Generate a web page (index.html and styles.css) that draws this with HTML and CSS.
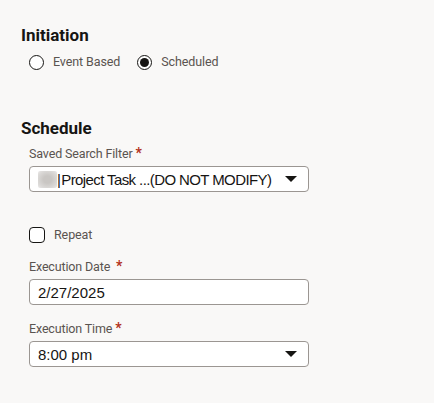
FILE: index.html
```html
<!DOCTYPE html>
<html>
<head>
<meta charset="utf-8">
<link rel="stylesheet" href="styles.css">
</head>
<body>
<div class="page">
  <section class="section">
    <h2 class="heading">Initiation</h2>
    <div class="radios">
      <label class="radio"><span class="radio-dot"></span><span class="opt-text">Event Based</span></label>
      <label class="radio"><span class="radio-dot checked"></span><span class="opt-text">Scheduled</span></label>
    </div>
  </section>

  <section class="section schedule">
    <h2 class="heading">Schedule</h2>
    <div class="field">
      <div class="label">Saved Search Filter <span class="req">*</span></div>
      <div class="box select">
        <span class="value tight"><span class="blur"></span><span class="caret-bar">|</span>Project Task ...(DO NOT MODIFY)</span>
        <span class="arrow"></span>
      </div>
    </div>

    <label class="check"><span class="check-box"></span><span class="opt-text">Repeat</span></label>

    <div class="field">
      <div class="label">Execution Date&nbsp; <span class="req">*</span></div>
      <div class="box"><span class="value">2/27/2025</span></div>
    </div>

    <div class="field">
      <div class="label">Execution Time <span class="req">*</span></div>
      <div class="box select">
        <span class="value">8:00 pm</span>
        <span class="arrow"></span>
      </div>
    </div>
  </section>
</div>
</body>
</html>
```

FILE: styles.css
```css
html, body {
  margin: 0;
  padding: 0;
  background: #f9f8f7;
}
body {
  font-family: Roboto, "Noto Sans", sans-serif;
  color: #161513;
}
.page {
  padding: 24px 0 0 21px;
  width: 288px;
}
.heading {
  margin: 0;
  font-size: 17px;
  font-weight: 700;
  line-height: 22px;
  color: #161513;
}
.radios {
  display: flex;
  gap: 17px;
  margin: 7px 0 0 8px;
}
.radio, .check {
  display: flex;
  align-items: center;
  gap: 9px;
}
.opt-text {
  font-size: 12.5px;
  letter-spacing: -0.1px;
  color: #5a5450;
  line-height: 18px;
}
.radio-dot {
  width: 13px;
  height: 13px;
  border: 1.3px solid #161513;
  border-radius: 50%;
  display: flex;
  align-items: center;
  justify-content: center;
  background: #fff;
}
.radio-dot.checked::after {
  content: "";
  width: 9px;
  height: 9px;
  border-radius: 50%;
  background: #161513;
}
.schedule {
  margin-top: 46px;
}
.field {
  margin-left: 8px;
}
.label {
  font-size: 12.5px;
  letter-spacing: -0.15px;
  line-height: 18px;
  color: #5a5450;
  margin-top: 5px;
  margin-bottom: 3px;
}
.req {
  color: #b3311b;
  font-weight: 700;
  font-size: 14px;
}
.box {
  box-sizing: border-box;
  width: 280px;
  height: 26px;
  border: 1px solid #9b9692;
  border-radius: 4px;
  background: #fff;
  display: flex;
  align-items: center;
  padding: 0 8px 0 8px;
}
.value {
  font-family: "Liberation Sans", Arial, sans-serif;
  font-size: 15px;
  color: #161513;
  flex: 1;
  display: flex;
  align-items: center;
  white-space: nowrap;
}
.value.tight {
  letter-spacing: -0.6px;
}
.blur {
  display: inline-block;
  width: 19px;
  height: 17px;
  background: radial-gradient(ellipse at center, #c9c6c3 30%, #dcdad8 75%, #eceaea 100%);
  border-radius: 2px;
}
.caret-bar {
  color: #161513;
  margin-right: 1px;
}
.arrow {
  width: 0;
  height: 0;
  border-left: 6px solid transparent;
  border-right: 6px solid transparent;
  border-top: 6px solid #161513;
  margin-right: 3px;
}
.check {
  margin: 34px 0 0 8px;
}
.check-box {
  box-sizing: border-box;
  width: 16px;
  height: 16px;
  border: 1.3px solid #161513;
  border-radius: 4px;
  background: #fff;
}
.check + .field .label {
  margin-top: 13px;
}
.field + .field .label {
  margin-top: 14px;
}
```
